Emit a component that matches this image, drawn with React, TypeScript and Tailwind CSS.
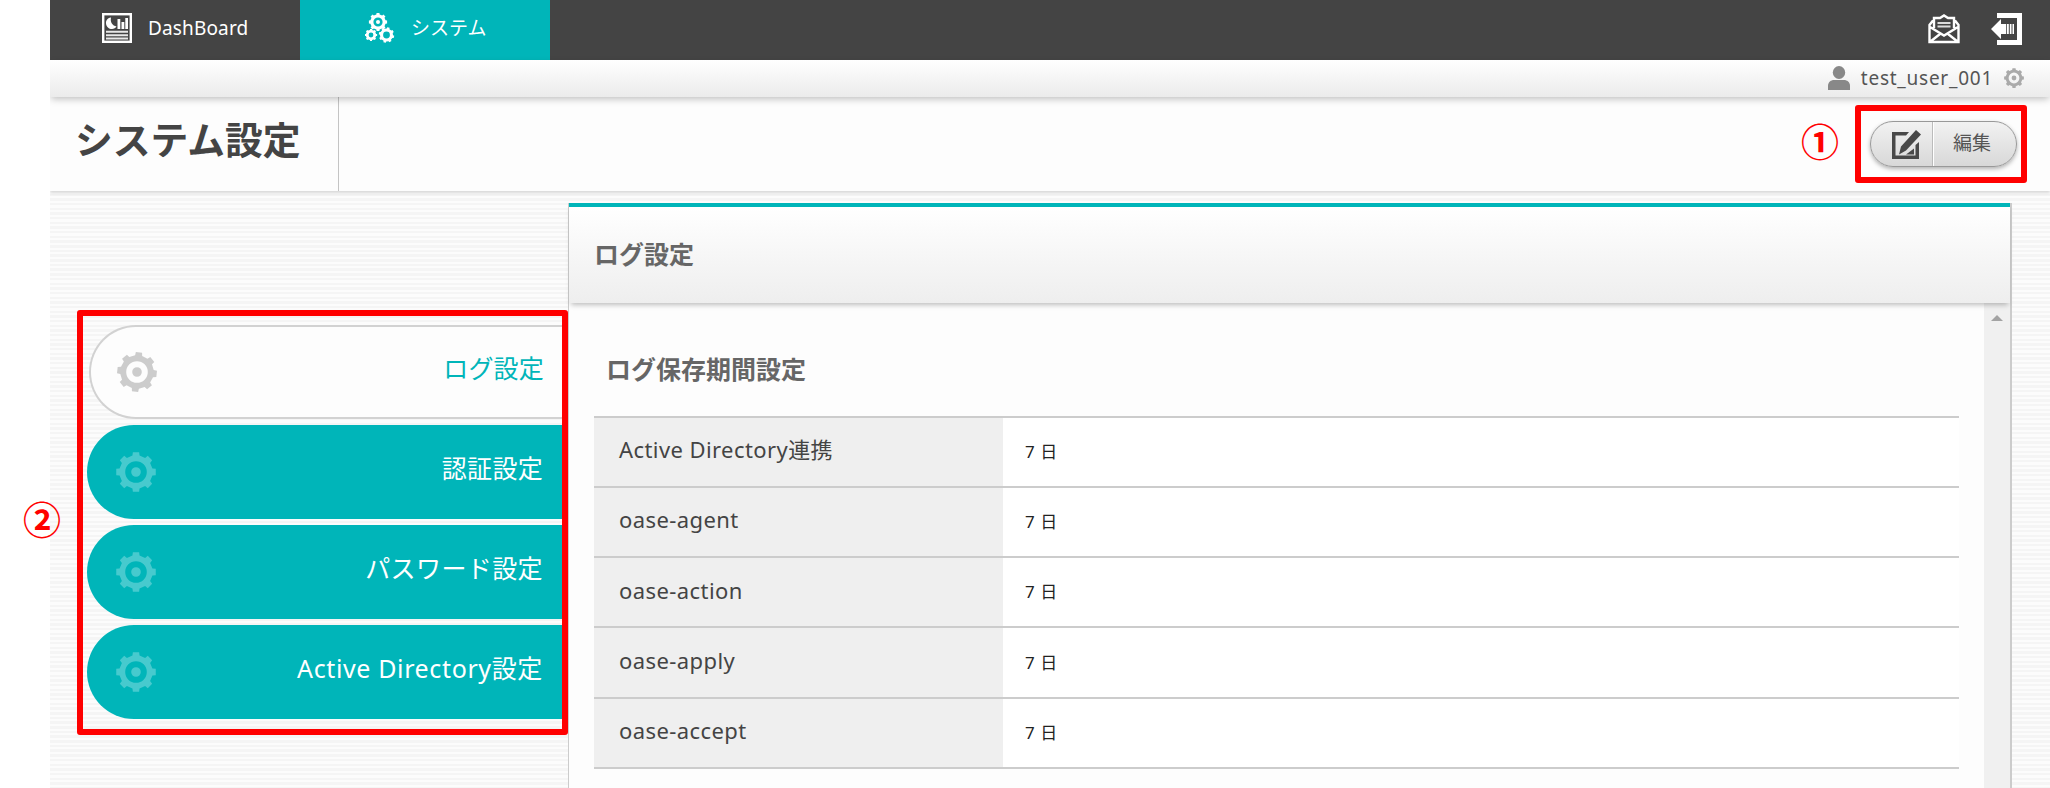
import React from "react";

const JP = "font-['Noto_Sans','Noto_Sans_CJK_JP',sans-serif]";

function gearPath(cx: number, cy: number, r: number, teeth = 8, inner = 0.78, phase = 0) {
  const pts: string[] = [];
  const step = (Math.PI * 2) / teeth;
  const at = (rad: number, a: number) =>
    `${(cx + rad * Math.sin(a)).toFixed(2)} ${(cy - rad * Math.cos(a)).toFixed(2)}`;
  for (let i = 0; i < teeth; i++) {
    const a = i * step + phase;
    pts.push(at(r * inner, a - step * 0.27), at(r, a - step * 0.2), at(r, a + step * 0.2), at(r * inner, a + step * 0.27));
  }
  return `M${pts.join("L")}Z`;
}
const hole = (cx: number, cy: number, r: number) =>
  `M${cx - r} ${cy}a${r} ${r} 0 1 0 ${2 * r} 0a${r} ${r} 0 1 0 ${-2 * r} 0Z`;

function Gear({ className, phase = 0 }: { className: string; phase?: number }) {
  return (
    <svg viewBox="0 0 40 40" className={className} fill="currentColor">
      <path fillRule="evenodd" d={gearPath(20, 20, 20, 8, 0.84, phase) + hole(20, 20, 10.8) + hole(20, 20, 4.8)} />
    </svg>
  );
}

function DashIcon() {
  return (
    <svg viewBox="0 0 30 30" className="h-[30px] w-[30px] shrink-0">
      <rect x="1.200" y="1.200" width="27.600" height="27.600" fill="none" stroke="#fff" strokeWidth="2.400" />
      <path d="M9 4.500C5 5 3.800 8 4 10.500c.3 3.500 3 5.500 6 5.500 2 0 3.500-1 4.500-2.500C10.500 12.500 8 9.500 9 4.500Z" fill="#fff" />
      <path d="M15.500 6h2.800v10h-2.800zM19.500 9h2.800v7h-2.800zM23.300 5h2.700v11h-2.700z" fill="#fff" />
      <path d="M4 18.800h22M4 22.200h22M4 25.600h22" stroke="#e8e8e8" strokeWidth="2" />
    </svg>
  );
}

function GearsIcon() {
  return (
    <svg viewBox="0 0 30 30" className="h-[30px] w-[30px] shrink-0" fill="#fff">
      <path fillRule="evenodd" d={gearPath(13, 9, 9.2, 8, 0.84) + hole(13, 9, 4.6) + hole(13, 9, 2)} />
      <path fillRule="evenodd" d={gearPath(6, 22, 6.2, 8, 0.84) + hole(6, 22, 2.4)} />
      <path fillRule="evenodd" d={gearPath(21.5, 22, 7.8, 8, 0.84, 0.25) + hole(21.5, 22, 3.4)} />
    </svg>
  );
}

const menu = [
  { label: "ログ設定", tracking: "tracking-[0.2px]" },
  { label: "認証設定", tracking: "tracking-[0.3px]" },
  { label: "パスワード設定", tracking: "tracking-[0.4px]" },
  { label: "Active Directory設定", tracking: "tracking-[0.63px]" },
];
const rows = ["Active Directory連携", "oase-agent", "oase-action", "oase-apply", "oase-accept"];

export default function App() {
  return (
    <div className={`relative h-[788px] w-[2050px] overflow-hidden bg-white pl-[50px] ${JP}`}>
      <div className="flex h-full flex-col overflow-hidden bg-[repeating-linear-gradient(180deg,#fcfcfc_0px,#fcfcfc_2.300px,#f5f5f5_2.300px,#f5f5f5_4.670px)]">
        <header className="flex h-[60px] shrink-0 items-stretch bg-[#444] text-[19px] text-white">
          <div className="flex w-[250px] items-center pb-1 pl-[52px]">
            <DashIcon />
            <span className="ml-4 tracking-[0.15px]">DashBoard</span>
          </div>
          <div className="flex w-[250px] items-center bg-[#00b5b9] pb-1 pl-[65px]">
            <GearsIcon />
            <span className="ml-4">システム</span>
          </div>
          <div className="ml-auto flex items-center gap-[31px] pr-[27px] pb-[3px]">
            <svg viewBox="0 0 32 30" className="h-[30px] w-[32px]" fill="none" stroke="#fff" strokeWidth="2.400">
              <path d="M5 6.500 1.500 11v17h29V11L27 6.500M6 14V4h6l4-2.500L20 4h6v10M2 13l14 8.500L30 13M2.500 27.500 12 20M29.500 27.500 20 20" />
              <path d="M9.500 9h13M9.500 12.500h13" stroke="#ddd" strokeWidth="2" />
            </svg>
            <svg viewBox="0 0 32 32" className="h-[32px] w-[32px]" fill="#fff">
              <path d="M6 0h25v32H6v-5h20V5H6zM0 16l10-10v5h2v10h-2v5z" />
              <path d="M12 11h3v10h-3zM15.800 11h2v10h-2zM18.800 11h1.700v10h-1.700zM21.500 11h1.500v10h-1.500z" />
            </svg>
          </div>
        </header>

        <div className="relative flex h-[37px] shrink-0 items-center justify-end bg-linear-to-b from-white to-[#ebebeb] pr-[26px] text-[19px] text-[#555] shadow-[0_3px_7px_-1px_rgba(0,0,0,0.25)]">
          <svg viewBox="0 0 22 24" className="mb-[2px] h-[24px] w-[22px]" fill="#888">
            <ellipse cx="11" cy="6.500" rx="6.200" ry="6.500" />
            <path d="M0 24v-4c0-4 3-6 6-6h10c3 0 6 2 6 6v4z" />
          </svg>
          <span className="ml-[11px] pb-px tracking-[0.75px]">test_user_001</span>
          <Gear className="mb-px ml-[11px] h-[20px] w-[20px] text-[#aaa]" />
        </div>

        <div className="flex h-[94px] shrink-0 items-stretch bg-[#fdfdfd] shadow-[0_2px_3px_rgba(0,0,0,0.15)]">
          <h1 className="flex w-[289px] items-center border-r border-[#c4c4c4] pb-[7px] pl-[25px] text-[37.800px] font-bold whitespace-nowrap text-[#444]">
            システム設定
          </h1>
          <button className="mt-[24px] mr-[33px] ml-auto flex h-[46px] w-[147px] items-stretch rounded-full border border-[#999] bg-linear-to-b from-[#f2f2f2] to-[#d8d8d8] text-[19px] text-[#555] shadow-[0_2px_4px_rgba(0,0,0,0.3)]">
            <span className="flex w-[62px] items-center border-r border-[#bbb] pl-[21px]">
              <svg viewBox="0 0 29 29" className="h-[29px] w-[29px]" fill="#484848">
                <path d="M0 2h17l-3 3.500H3.500v20h20V15L27 12v17H0zM24 0l5 4.500-15 16-7 4 2-8zM14 24.500l8-6v6z" />
              </svg>
            </span>
            <span className="flex flex-1 items-center justify-center border-l border-white pr-[6px] pb-[2px]">編集</span>
          </button>
        </div>

        <main className="flex min-h-0 flex-1 pt-[12px]">
          <nav className="flex w-[518px] shrink-0 flex-col gap-[6px] pt-[122px] pr-[5px] pl-[37px]">
            {menu.map((m, i) => (
              <div
                key={m.label}
                className={
                  i === 0
                    ? "ml-[2px] flex h-[94px] items-center justify-between rounded-l-full border-2 border-r-0 border-[#d2d2d2] bg-[#fdfdfd] pr-[19px] pl-[26px] text-[25px] text-[#00b5b9]"
                    : "flex h-[94px] items-center justify-between rounded-l-full bg-[#00b5b9] pr-[20px] pl-[29px] text-[25px] text-white"
                }
              >
                <Gear phase={i === 0 ? 0.1 : 0} className={i === 0 ? "h-[40px] w-[40px] text-[#ccc]" : "h-[40px] w-[40px] text-[#47cace]"} />
                <span className={`pb-[6px] ${m.tracking}`}>{m.label}</span>
              </div>
            ))}
          </nav>
          <section className="flex w-[1444px] shrink-0 flex-col border-r-2 border-l border-[#ccc] bg-[#fdfdfd]">
            <div className="relative flex h-[100px] shrink-0 items-center border-t-4 border-t-[#00b5b9] bg-linear-to-b from-white to-[#eee] pl-[25px] text-[25px] font-bold text-[#666] shadow-[0_4px_5px_-2px_rgba(0,0,0,0.25)]">
              ログ設定
            </div>
            <div className="flex min-h-0 flex-1">
              <div className="flex-1 pr-[25px] pl-[25px]">
                <h2 className="flex h-[112.500px] items-center pt-[21px] pl-[12px] text-[25px] font-bold text-[#666]">ログ保存期間設定</h2>
                <div className="border-t-2 border-[#ccc] bg-white">
                  {rows.map((r) => (
                    <div key={r} className="flex h-[70.300px] items-stretch border-b-2 border-[#ccc]">
                      <div className="flex w-[409px] items-center bg-[#efefef] pb-[4px] pl-[25px] text-[22px] tracking-[0.420px] text-[#444]">{r}</div>
                      <div className="flex items-center pl-[22px] text-[17px] tracking-[0.5px] text-[#222]">7 日</div>
                    </div>
                  ))}
                </div>
              </div>
              <div className="flex w-[26px] justify-center bg-[#f0f0f0] pt-[12px]">
                <svg viewBox="0 0 12 6" className="h-[6px] w-[12px]" fill="#a3a3a3">
                  <path d="M6 0l6 6H0z" />
                </svg>
              </div>
            </div>
          </section>
        </main>
      </div>

      <div className="absolute top-[105px] left-[1855px] h-[78px] w-[172px] rounded-[3px] border-[6px] border-[#f00]" />
      <div className="absolute top-[310px] left-[77px] h-[425px] w-[491px] rounded-[3px] border-[6px] border-[#f00]" />
      <div className="absolute top-[111px] left-[1801px] text-[38px] leading-[60px] font-bold text-[#f00]">①</div>
      <div className="absolute top-[489px] left-[23px] text-[38px] leading-[60px] font-bold text-[#f00]">②</div>
    </div>
  );
}
